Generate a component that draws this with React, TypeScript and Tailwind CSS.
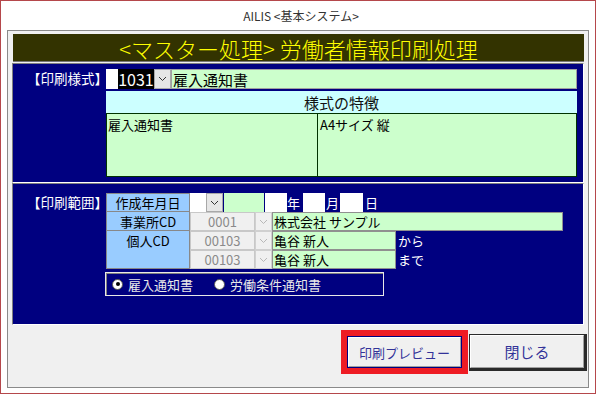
import React from "react";

const Chevron = ({ disabled = false }: { disabled?: boolean }) => (
  <svg width="9" height="6" viewBox="0 0 9 6">
    <polyline points="1,1 4.5,4.5 8,1" fill="none" stroke={disabled ? "#b8b8b8" : "#333"} strokeWidth="1" />
  </svg>
);

const Arrow = ({ disabled = false, w = "w-[17px]" }: { disabled?: boolean; w?: string }) => (
  <div className={`${w} h-full flex items-center justify-center border ${disabled ? "bg-[#f0f0f0] border-[#d0d0d0]" : "bg-[#e6e6e6] border-[#a8a8a8]"}`}>
    <Chevron disabled={disabled} />
  </div>
);

const Radio = ({ checked }: { checked: boolean }) => (
  <div className="w-[11px] h-[11px] rounded-full bg-white border border-[#555] flex items-center justify-center">
    {checked && <div className="w-[4px] h-[4px] rounded-full bg-black" />}
  </div>
);

export default function App() {
  return (
    <div
      className="w-[596px] h-[394px] border border-[#b5474b] bg-white flex flex-col overflow-hidden"
      style={{ fontFamily: '"Noto Sans CJK JP", "Noto Sans", sans-serif' }}
    >
      <div className="h-[29px] flex items-center justify-center text-[12px] leading-none text-[#333] pl-[6px]">
        {"AILIS <基本システム>"}
      </div>
      <div className="ml-[6px] w-[582px] h-[358px] border border-[#8a8a8a] bg-[#f0f0f0] flex flex-col pl-[4px] pt-[3px]">
        {/* title bar */}
        <div className="ml-[1px] w-[571px] h-[28px] bg-[#333300] flex items-center justify-center text-[22px] font-light leading-none text-[#ffff00] border-b border-[#777]">
          {"<マスター処理> 労働者情報印刷処理"}
        </div>
        <div className="h-[1px]" />

        {/* panel 1 */}
        <div className="w-[572px] h-[120px] bg-[#000080] border border-t-[#808080] border-l-[#808080] border-b-white border-r-white flex pt-[5px]">
          <div className="w-[93px] h-[20px] flex items-center pl-[14px] text-[13.5px] leading-none text-white">
            【印刷様式】
          </div>
          <div className="w-[471px] flex flex-col">
            <div className="h-[20px] flex">
              <div className="w-[48px] h-full bg-white flex justify-end">
                <div className="w-[36px] h-full bg-black text-white text-[16px] leading-none flex items-center justify-center">1031</div>
              </div>
              <Arrow />
              <div className="flex-1 h-full bg-[#ccffcc] border border-[#a0a0a0] text-[15px] leading-none text-black flex items-center pl-[1px]">
                雇入通知書
              </div>
            </div>
            <div className="mt-[2px] h-[22px] bg-[#ccffff] flex items-center justify-center text-[15px] leading-none text-[#111]">
              様式の特徴
            </div>
            <div className="h-[64px] flex">
              <div className="w-[212px] h-full bg-[#ccffcc] border border-[#003300] text-[13px] leading-none text-black pt-[4px] pl-[1px]">
                雇入通知書
              </div>
              <div className="flex-1 h-full bg-[#ccffcc] border border-l-0 border-[#003300] text-[13px] leading-none text-black pt-[4px] pl-[2px]">
                A4サイズ 縦
              </div>
            </div>
          </div>
        </div>

        {/* panel 2 */}
        <div className="w-[572px] h-[142px] bg-[#000080] border border-t-[#808080] border-l-[#808080] border-b-white border-r-white flex pt-[9px]">
          <div className="w-[93px] h-[19px] flex items-center pl-[14px] text-[13.5px] leading-none text-white">
            【印刷範囲】
          </div>
          <div className="flex flex-col">
            <div className="flex">
              <div className="w-[84px] flex flex-col">
                <div className="h-[19px] bg-[#99ccff] border border-[#888] flex items-center justify-center text-[13px] leading-none text-black">作成年月日</div>
                <div className="h-[19px] bg-[#99ccff] border border-t-0 border-[#888] flex items-center justify-center text-[13px] leading-none text-black">事業所CD</div>
                <div className="h-[38px] bg-[#99ccff] border border-t-0 border-[#888] flex justify-center pt-[3px] text-[13px] leading-none text-black">個人CD</div>
              </div>
              <div className="flex flex-col">
                <div className="h-[19px] flex items-stretch text-[13px] leading-none text-white">
                  <div className="w-[16px] bg-white" />
                  <Arrow w="w-[17px]" />
                  <div className="w-[40px] bg-[#ccffcc] ml-[1px]" />
                  <div className="w-[22px] bg-white ml-[1px]" />
                  <div className="w-[16px] flex items-center">年</div>
                  <div className="w-[22px] bg-white" />
                  <div className="w-[15px] flex items-center pl-[1px]">月</div>
                  <div className="w-[23px] bg-white" />
                  <div className="flex items-center pl-[2px]">日</div>
                </div>
                <div className="h-[19px] flex">
                  <div className="w-[65px] bg-[#f0f0f0] border border-[#c8c8c8] flex items-center justify-center text-[13px] leading-none text-[#8a8a8a]">0001</div>
                  <Arrow disabled />
                  <div className="w-[291px] bg-[#ccffcc] border border-[#909090] flex items-center pl-[1px] text-[13px] leading-none text-black">株式会社 サンプル</div>
                </div>
                <div className="h-[19px] flex">
                  <div className="w-[65px] bg-[#f0f0f0] border border-[#c8c8c8] flex items-center justify-center text-[13px] leading-none text-[#8a8a8a]">00103</div>
                  <Arrow disabled />
                  <div className="w-[124px] bg-[#ccffcc] border border-[#909090] flex items-center pl-[1px] text-[13px] leading-none text-black">亀谷 新人</div>
                  <div className="flex items-center pl-[2px] text-[13px] leading-none text-white">から</div>
                </div>
                <div className="h-[19px] flex">
                  <div className="w-[65px] bg-[#f0f0f0] border border-[#c8c8c8] flex items-center justify-center text-[13px] leading-none text-[#8a8a8a]">00103</div>
                  <Arrow disabled />
                  <div className="w-[124px] bg-[#ccffcc] border border-[#909090] flex items-center pl-[1px] text-[13px] leading-none text-black">亀谷 新人</div>
                  <div className="flex items-center pl-[2px] text-[13px] leading-none text-white">まで</div>
                </div>
              </div>
            </div>
            <div className="mt-[3px] -ml-[1px] w-[279px] h-[24px] border border-[#e8e8e8] shadow-[inset_1px_1px_0_#808080] flex items-center pl-[6px] text-[13px] leading-none text-[#e8e8e8]">
              <Radio checked />
              <span className="ml-[5px]">雇入通知書</span>
              <div className="ml-[21px]">
                <Radio checked={false} />
              </div>
              <span className="ml-[5px]">労働条件通知書</span>
            </div>
          </div>
        </div>

        {/* buttons */}
        <div className="flex justify-end items-center mt-[5px] pr-[1px]">
          <div className="border-[6px] border-[#ee1c24] h-[44px] w-[127px] flex">
            <div className="flex-1 border border-[#000080] bg-[#f0f0f0]">
              <div className="w-full h-full border border-t-white border-l-white border-r-[#a0a0a0] border-b-[#a0a0a0] flex items-center justify-center text-[13px] leading-none text-[#333399]">
                印刷プレビュー
              </div>
            </div>
          </div>
          <div className="ml-[1px] w-[118px] h-[37px] border border-[#2a2a2a] border-r-[3px] border-b-[3px] bg-[#f0f0f0]">
            <div className="w-full h-full border border-t-white border-l-white border-r-[#a0a0a0] border-b-[#a0a0a0] flex items-center justify-center text-[15px] leading-none text-[#333399]">
              閉じる
            </div>
          </div>
        </div>
      </div>
    </div>
  );
}
